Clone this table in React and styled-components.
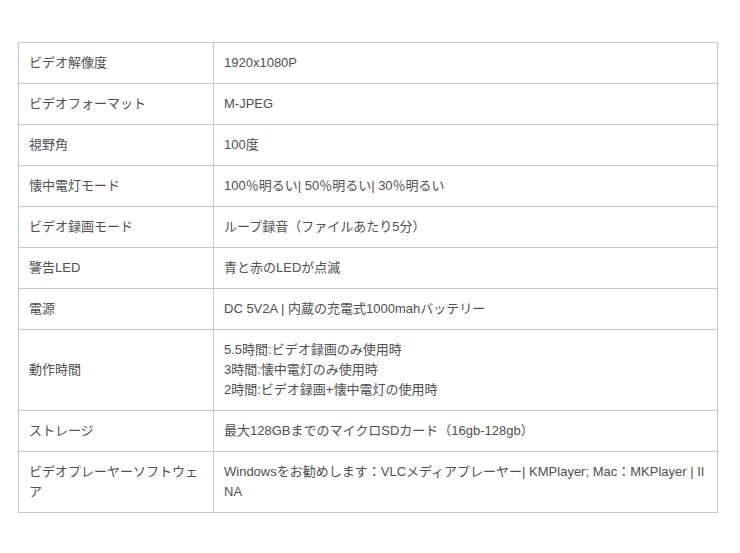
import React from "react";
import styled, { createGlobalStyle } from "styled-components";

const GlobalStyle = createGlobalStyle`
  body {
    margin: 0;
    background: #ffffff;
    font-family: "Liberation Sans", "Noto Sans CJK JP", sans-serif;
  }
`;

const Page = styled.div`
  padding: 42px 22px 40px 18px;
`;

const SpecTable = styled.table`
  width: 700px;
  border-collapse: collapse;
  font-size: 13px;
  line-height: 20px;
  color: #505050;
`;

const Cell = styled.td`
  border: 1px solid #c8c8c8;
  padding: 10px;
  vertical-align: middle;
  width: ${(p) => (p.$label ? "174px" : "auto")};
  word-break: break-all;
`;

const rows = [
  ["ビデオ解像度", ["1920x1080P"]],
  ["ビデオフォーマット", ["M-JPEG"]],
  ["視野角", ["100度"]],
  ["懐中電灯モード", ["100％明るい| 50％明るい| 30％明るい"]],
  ["ビデオ録画モード", ["ループ録音（ファイルあたり5分）"]],
  ["警告LED", ["青と赤のLEDが点滅"]],
  ["電源", ["DC 5V2A | 内蔵の充電式1000mahバッテリー"]],
  [
    "動作時間",
    [
      "5.5時間:ビデオ録画のみ使用時",
      "3時間:懐中電灯のみ使用時",
      "2時間:ビデオ録画+懐中電灯の使用時",
    ],
  ],
  ["ストレージ", ["最大128GBまでのマイクロSDカード（16gb-128gb）"]],
  [
    "ビデオプレーヤーソフトウェア",
    ["Windowsをお勧めします：VLCメディアプレーヤー| KMPlayer; Mac：MKPlayer | IINA"],
  ],
];

const Line = styled.div``;

export default function App() {
  return (
    <>
      <GlobalStyle />
      <Page>
        <SpecTable>
          <tbody>
            {rows.map(([label, values]) => (
              <tr key={label}>
                <Cell $label>{label}</Cell>
                <Cell>
                  {values.map((v) => (
                    <Line key={v}>{v}</Line>
                  ))}
                </Cell>
              </tr>
            ))}
          </tbody>
        </SpecTable>
      </Page>
    </>
  );
}
